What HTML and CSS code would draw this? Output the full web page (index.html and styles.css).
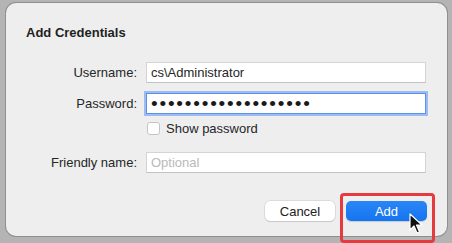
FILE: index.html
```html
<!DOCTYPE html>
<html lang="en">
<head>
    <meta charset="UTF-8">
    <meta name="viewport" content="width=device-width, initial-scale=1.0">
    <title>Add Credentials</title>
    <link rel="stylesheet" href="styles.css">
</head>
<body>
    <div class="dialog">
        <h1>Add Credentials</h1>
        <form class="form">
            <label class="label" for="username">Username:</label>
            <input class="field" type="text" id="username" value="cs\Administrator">

            <label class="label row-password" for="password">Password:</label>
            <input class="field field-focus row-password" type="password" id="password" value="abcdefghijklmnopqrs">

            <span class="row-check"></span>
            <label class="check row-check"><span class="box"></span>Show password</label>

            <label class="label row-friendly" for="friendly">Friendly name:</label>
            <input class="field row-friendly" type="text" id="friendly" placeholder="Optional">
        </form>
        <div class="actions">
            <button class="btn btn-cancel" type="button">Cancel</button>
            <button class="btn btn-add" type="button">Add</button>
        </div>
        <!-- annotation over the Add button -->
        <div class="highlight"></div>
        <svg class="cursor" width="14" height="22" viewBox="0 0 14 22">
            <path d="M1 1 L1 17 L5 13 L8 20 L10.5 19 L7.5 12 L13 12 Z" fill="#111" stroke="#fff" stroke-width="1.2" stroke-linejoin="round"/>
        </svg>
    </div>
</body>
</html>
```

FILE: styles.css
```css
:root {
    --dialog-bg: #eeeeee;
    --text-color: #262626;
    --field-border: #d4d4d4;
    --focus-color: #6f9ef0;
    --blue: #1d7cf4;
}

* {
    box-sizing: border-box;
    margin: 0;
    padding: 0;
}

body {
    font-family: 'Liberation Sans', Arial, sans-serif;
    font-size: 13px;
    color: var(--text-color);
    background-color: #b4b4b4;
    width: 452px;
    height: 243px;
    overflow: hidden;
}

.dialog {
    position: relative;
    width: 441px;
    height: 233px;
    margin: 3px 0 0 6px;
    background-color: var(--dialog-bg);
    border-radius: 10px;
    box-shadow: 0 0 0 1px #8f8f8f;
    padding: 22px 20px 0 20px;
}

h1 {
    font-size: 13px;
    font-weight: bold;
    line-height: 16px;
    color: #1f1f1f;
}

.form {
    display: grid;
    grid-template-columns: 111px 280px;
    column-gap: 9px;
    align-items: center;
    margin-top: 21px;
}

.label {
    text-align: right;
    line-height: 21px;
}

.field {
    height: 21px;
    border: 1px solid var(--field-border);
    border-bottom-color: #c2c2c2;
    background-color: #fff;
    font-family: inherit;
    font-size: 13px;
    color: var(--text-color);
    padding: 0 4px;
    outline: none;
}

.field::placeholder {
    color: #b9b9b9;
}

.field-focus {
    border-color: #5f8fe6;
    box-shadow: 0 0 0 2px #9cbdf4;
    letter-spacing: 1.8px;
    font-size: 19px;
    color: #1a1a1a;
}

.row-password {
    margin-top: 10px;
}

.row-check {
    margin-top: 8px;
}

.row-friendly {
    margin-top: 17px;
}

.check {
    display: flex;
    align-items: center;
    gap: 6px;
    line-height: 13px;
    padding-left: 1px;
}

.box {
    width: 13px;
    height: 13px;
    border: 1px solid #c4c4c4;
    border-radius: 3px;
    background-color: #fff;
}

.actions {
    display: flex;
    justify-content: flex-end;
    gap: 11px;
    margin-top: 28px;
}

.btn {
    height: 20px;
    border: none;
    border-radius: 5px;
    font-family: inherit;
    font-size: 13px;
}

.btn-cancel {
    width: 70px;
    background-color: #fff;
    color: #222;
    box-shadow: 0 0 0 0.5px #c8c8c8, 0 1px 1px rgba(0, 0, 0, 0.15);
}

.btn-add {
    width: 81px;
    background: linear-gradient(#2a86f7, #1574f0);
    color: #fff;
    font-weight: 500;
    box-shadow: 0 1px 1px rgba(0, 0, 0, 0.15);
}

.highlight {
    position: absolute;
    left: 334px;
    top: 190px;
    width: 95px;
    height: 50px;
    border: 3px solid #e53a40;
    border-radius: 4px;
}

.cursor {
    position: absolute;
    left: 403px;
    top: 210px;
}
```
